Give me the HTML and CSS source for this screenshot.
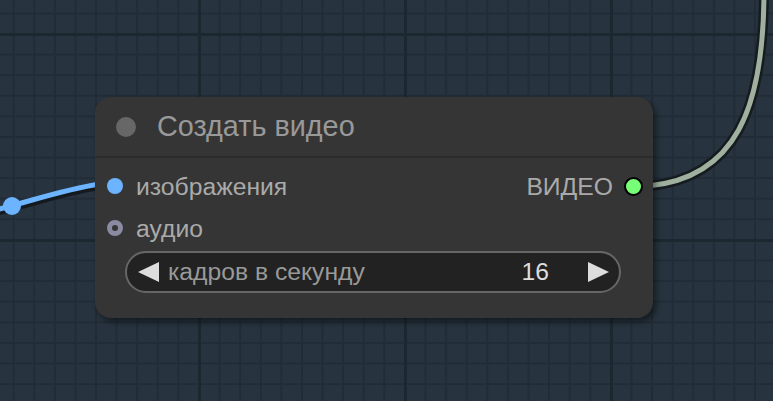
FILE: index.html
```html
<!DOCTYPE html>
<html lang="ru">
<head>
    <meta charset="UTF-8">
    <title>Создать видео</title>
<link rel="stylesheet" href="styles.css">
</head>
<body>
    <div id="canvas">
        <svg class="links" width="773" height="401" viewBox="0 0 773 401">
            <!-- blue link into "изображения" -->
            <path d="M -20 217 C 30 205, 60 193, 100 187" class="link-shadow"/>
            <path d="M -20 214 C 30 202, 60 190, 100 184" class="link-blue"/>
            <circle cx="12" cy="206" r="9" fill="#6cb4ff"/>
            <!-- grey link out of "ВИДЕО" -->
            <path d="M 648 186 C 735 178, 764 110, 764 -10" class="link-shadow-wide"/>
            <path d="M 648 186 C 735 178, 764 110, 764 -10" class="link-grey"/>
        </svg>

        <div class="node">
            <div class="node-title">
                <span class="title-dot"></span>
                <span class="title-text">Создать видео</span>
            </div>
            <div class="node-body">
                <div class="slot-row">
                    <div class="slot-in">
                        <span class="dot dot-image"></span>
                        <span class="slot-label">изображения</span>
                    </div>
                    <div class="slot-out">
                        <span class="slot-label">ВИДЕО</span>
                        <span class="dot dot-video"></span>
                    </div>
                </div>
                <div class="slot-row">
                    <div class="slot-in">
                        <span class="dot dot-audio"></span>
                        <span class="slot-label">аудио</span>
                    </div>
                </div>
                <div class="widget">
                    <span class="arrow arrow-left"></span>
                    <span class="widget-name">кадров в секунду</span>
                    <span class="widget-value">16</span>
                    <span class="arrow arrow-right"></span>
                </div>
            </div>
        </div>
    </div>
</body>
</html>
```

FILE: styles.css
```css
*{
    margin: 0;
    padding: 0;
    box-sizing: border-box;
}
html, body{
    width: 100%;
    height: 100%;
    overflow: hidden;
}
body{
    font-family: "Liberation Sans", Arial, sans-serif;
    background: #27333e;
}
#canvas{
    width: 773px;
    height: 401px;
    position: relative;
    overflow: hidden;
    background-color: #27333e;
    background-image:
        linear-gradient(to right, #1d2730 3px, transparent 3px),
        linear-gradient(to bottom, #1d2730 3px, transparent 3px),
        linear-gradient(to right, #212c36 2px, transparent 2px),
        linear-gradient(to bottom, #212c36 2px, transparent 2px);
    background-size: 206px 206px, 206px 206px, 20.6px 20.6px, 20.6px 20.6px;
    background-position: 198px 0, 0 33px, 198px 0, 0 33px;
}

.links{
    position: absolute;
    left: 0;
    top: 0;
}
.link-shadow{
    fill: none;
    stroke: #14191e;
    stroke-width: 6;
}
.link-blue{
    fill: none;
    stroke: #6cb4ff;
    stroke-width: 5;
}
.link-shadow-wide{
    fill: none;
    stroke: #151b20;
    stroke-width: 10;
}
.link-grey{
    fill: none;
    stroke: #9fb09f;
    stroke-width: 5;
}

/* node */
.node{
    position: absolute;
    left: 95px;
    top: 97px;
    width: 558px;
    height: 221px;
    background: #353535;
    border-radius: 16px;
    box-shadow: 3px 4px 6px rgba(0, 0, 0, 0.45);
    display: flex;
    flex-direction: column;
}
.node-title{
    height: 61px;
    border-bottom: 2px solid #2b2b2b;
    display: flex;
    align-items: center;
    padding-left: 21px;
    gap: 21px;
}
.title-dot{
    width: 20px;
    height: 20px;
    border-radius: 50%;
    background: #676767;
}
.title-text{
    font-size: 28.8px;
    color: #999;
}

.node-body{
    padding: 7px 0 0;
    display: flex;
    flex-direction: column;
}
.slot-row{
    height: 42px;
    display: flex;
    align-items: center;
    justify-content: space-between;
}
.slot-in, .slot-out{
    display: flex;
    align-items: center;
}
.slot-in{
    padding-left: 12px;
    gap: 13px;
}
.slot-out{
    padding-right: 10px;
    gap: 11px;
}
.slot-label{
    font-size: 24.7px;
    color: #aaa;
    padding-top: 1px;
}
.dot{
    width: 16px;
    height: 16px;
    border-radius: 50%;
}
.dot-image{
    background: #6cb4ff;
}
.dot-audio{
    background: #353535;
    border: 5px solid #8a8aa0;
}
.dot-video{
    width: 19px;
    height: 19px;
    background: #77ff77;
    border: 2px solid #000;
}

.widget{
    margin: 2px 32px 0 30px;
    height: 42px;
    border: 2px solid #666;
    border-radius: 21px;
    background: #222;
    display: flex;
    align-items: center;
    padding: 0 10px 0 11px;
}
.widget-name{
    margin-left: 9px;
    font-size: 24.7px;
    color: #999;
    flex: 1;
}
.widget-value{
    font-size: 24.7px;
    color: #ddd;
    margin-right: 39px;
}
.arrow{
    width: 0;
    height: 0;
    border-top: 10px solid transparent;
    border-bottom: 10px solid transparent;
}
.arrow-left{
    border-right: 21px solid #ddd;
}
.arrow-right{
    border-left: 21px solid #ddd;
}
```
